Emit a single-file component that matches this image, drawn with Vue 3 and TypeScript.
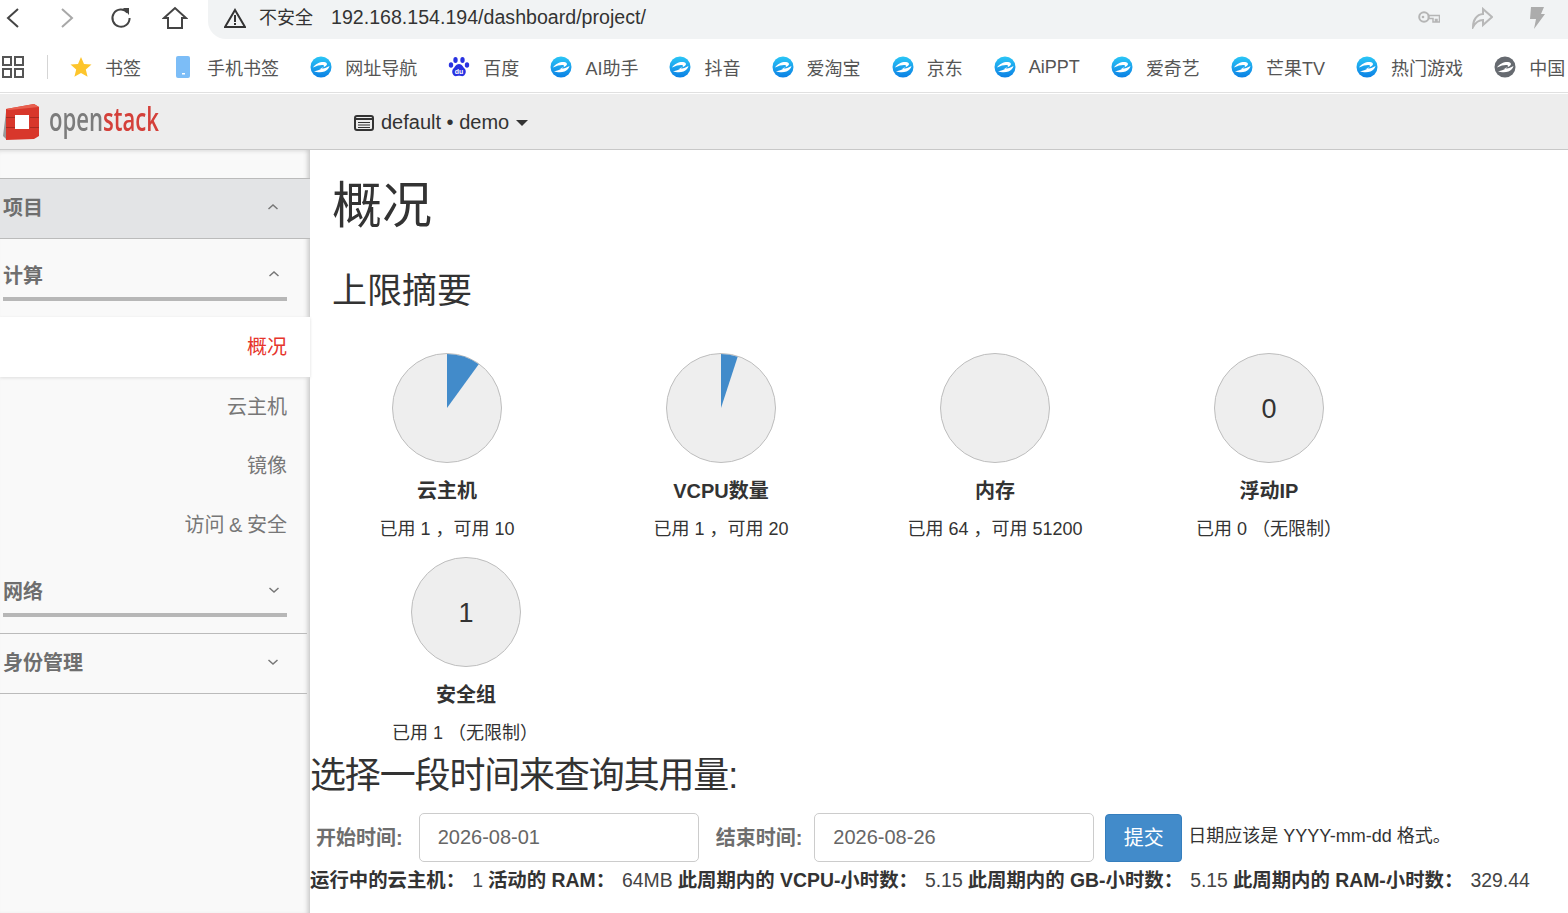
<script setup lang="ts">
interface Quota {
  title: string
  used: number
  limit: number | null
  text: string
}

interface Bookmark {
  label: string
  kind: 'star' | 'phone' | 'edge' | 'paw' | 'grey'
}

const bookmarks: Bookmark[] = [
  { label: '书签', kind: 'star' },
  { label: '手机书签', kind: 'phone' },
  { label: '网址导航', kind: 'edge' },
  { label: '百度', kind: 'paw' },
  { label: 'AI助手', kind: 'edge' },
  { label: '抖音', kind: 'edge' },
  { label: '爱淘宝', kind: 'edge' },
  { label: '京东', kind: 'edge' },
  { label: 'AiPPT', kind: 'edge' },
  { label: '爱奇艺', kind: 'edge' },
  { label: '芒果TV', kind: 'edge' },
  { label: '热门游戏', kind: 'edge' },
  { label: '中国', kind: 'grey' }
]

const quotas: Quota[] = [
  { title: '云主机', used: 1, limit: 10, text: '已用 1 ，可用 10' },
  { title: 'VCPU数量', used: 1, limit: 20, text: '已用 1 ，可用 20' },
  { title: '内存', used: 64, limit: 51200, text: '已用 64 ，可用 51200' },
  { title: '浮动IP', used: 0, limit: null, text: '已用 0 （无限制）' }
]

const groupQuota: Quota = { title: '安全组', used: 1, limit: null, text: '已用 1 （无限制）' }

function hasSlice(q: Quota): boolean {
  return !!q.limit && q.used / q.limit > 0.005
}

function slicePath(q: Quota): string {
  if (!q.limit) return ''
  const angle = (q.used / q.limit) * Math.PI * 2
  const x = 55 + 54 * Math.sin(angle)
  const y = 55 - 54 * Math.cos(angle)
  return `M55 55 L55 1 A54 54 0 0 1 ${x.toFixed(2)} ${y.toFixed(2)} Z`
}

const stats = [
  { label: '运行中的云主机：', value: '1' },
  { label: '活动的 RAM：', value: '64MB' },
  { label: '此周期内的 VCPU-小时数：', value: '5.15' },
  { label: '此周期内的 GB-小时数：', value: '5.15' },
  { label: '此周期内的 RAM-小时数：', value: '329.44' }
]
</script>

<template>
  <div class="page">
    <div class="toolbar">
      <div class="nav-btns">
        <svg class="tool" width="20" height="24" viewBox="0 0 20 24"><path d="M15 3 5 12l10 9" fill="none" stroke="#444" stroke-width="2" /></svg>
        <svg class="tool fwd" width="20" height="24" viewBox="0 0 20 24"><path d="m5 3 10 9-10 9" fill="none" stroke="#a8a8a8" stroke-width="2" /></svg>
        <svg class="tool reload" width="24" height="24" viewBox="0 0 24 24"><path d="M18.500 6.500A8.600 8.600 0 1 0 20.600 12" fill="none" stroke="#444" stroke-width="2" /><path d="M14 2h6v7z" fill="#444" /></svg>
        <svg class="tool home" width="26" height="24" viewBox="0 0 26 24"><path d="M2 12 13 2l11 10h-4v10H6V12z" fill="none" stroke="#444" stroke-width="2" /></svg>
      </div>
      <div class="address">
        <svg width="22" height="20" viewBox="0 0 22 20"><path d="M11 2 21 19H1z" fill="none" stroke="#333" stroke-width="2" /><path d="M11 7v7M11 15v2" stroke="#333" stroke-width="2" /></svg>
        <span class="unsafe">不安全</span>
        <span class="url">192.168.154.194/dashboard/project/</span>
        <div class="addr-right">
          <svg class="key" width="22" height="13" viewBox="0 0 22 13"><circle cx="6" cy="6" r="4.800" fill="none" stroke="#b5b5b5" stroke-width="2" /><circle cx="5" cy="6" r="1.300" fill="#b5b5b5" /><path d="M10.500 4.500H21.500V11H19V8.500h-1.500V11H15V7.500h-4.500z" fill="none" stroke="#b5b5b5" stroke-width="1.500" /></svg>
          <svg class="share" width="22" height="22" viewBox="0 0 22 22"><path d="M12 2l9 8-9 8v-5c-4.500 0-7.500 2.500-10 7 0-7 3.500-12.500 10-13z" fill="none" stroke="#b8b8b8" stroke-width="2" /></svg>
          <svg class="bolt" width="16" height="24" viewBox="0 0 16 24"><path d="M2 1h13l-3 7h4L5 23l2-10H1z" fill="#acacac" /></svg>
        </div>
      </div>
    </div>

    <div class="bookmarks">
      <svg class="apps" width="22" height="22" viewBox="0 0 22 22">
        <g fill="none" stroke="#555" stroke-width="2">
          <rect x="1" y="1" width="8" height="8" />
          <rect x="13" y="1" width="8" height="8" />
          <rect x="1" y="13" width="8" height="8" />
          <rect x="13" y="13" width="8" height="8" />
        </g>
      </svg>
      <span class="divider"></span>
      <div v-for="b in bookmarks" :key="b.label" class="bookmark">
        <svg v-if="b.kind === 'star'" width="22" height="22" viewBox="0 0 22 22"><path d="m11 1 3 7 7.500.6-5.700 4.900 1.800 7.300L11 16.900l-6.600 3.900 1.800-7.300L.5 8.600 8 8z" fill="#fdc52c" /></svg>
        <svg v-else-if="b.kind === 'phone'" width="22" height="22" viewBox="0 0 22 22"><rect x="4" y="0" width="14" height="22" rx="2" fill="#7cbdf7" /><rect x="10" y="17" width="3" height="1.500" fill="#fff" /></svg>
        <svg v-else-if="b.kind === 'paw'" width="22" height="22" viewBox="0 0 22 22">
          <g fill="#2932e1">
            <ellipse cx="7.500" cy="4" rx="2.200" ry="3" />
            <ellipse cx="14.500" cy="4" rx="2.200" ry="3" />
            <ellipse cx="3" cy="9" rx="2.200" ry="2.800" />
            <ellipse cx="19" cy="9" rx="2.200" ry="2.800" />
            <path d="M11 8c3 0 4 3 6 5 2 3 0 8-4 7-1.500-.4-2.500-.4-4 0-4 1-6-4-4-7 2-2 3-5 6-5z" />
          </g>
          <text x="11" y="18" text-anchor="middle" class="du">du</text>
        </svg>
        <svg v-else width="22" height="22" viewBox="0 0 22 22">
          <defs>
            <linearGradient id="edgeFill" x1="0" y1="0" x2="0" y2="1">
              <stop offset="0" stop-color="#2bc6f6" />
              <stop offset="1" stop-color="#0b80e4" />
            </linearGradient>
          </defs>
          <circle cx="11" cy="11" r="10.500" :fill="b.kind === 'grey' ? '#666a70' : 'url(#edgeFill)'" />
          <path d="M3 11.500C6 6.500 14 4.500 16.500 7c1.800 2-1.500 4-7 5.500 3 .4 7-.5 10-2.500-.5 2.500-2.500 4.500-5 5.500-4 1.500-8 .5-10.500 0 4.500-1 9.500-3 10-5.500.3-1.700-5-1.500-11 1.500z" fill="#fff" />
        </svg>
        <span>{{ b.label }}</span>
      </div>
    </div>

    <header class="topbar">
      <div class="brand">
        <svg class="cube" width="37" height="38" viewBox="0 0 37 38">
          <path d="M0 33 3 9v27z" fill="#999" />
          <path d="M3 6 31 1l5 3v29l-5 3-28 1z" fill="#d8372b" />
          <path d="M3 6 31 1l5 3-30 3z" fill="#e8604f" />
          <path d="M3 14h9v1H3zM3 24h9v1H3zM27 14h9v1h-9zM27 24h9v1h-9z" fill="#a92a20" />
          <rect x="12" y="12" width="14" height="14" fill="#fff" />
        </svg>
        <span class="wordmark"><span class="open">open</span><span class="stack">stack</span></span>
      </div>
      <div class="project">
        <svg width="20" height="16" viewBox="0 0 20 16"><rect x="1" y="1" width="18" height="14" rx="2" fill="none" stroke="#333" stroke-width="2" /><path d="M1 3h18v2H1zM4 7h12v1H4zM4 9.500h12v1H4zM4 12h12v1H4z" fill="#333" /></svg>
        <span>default • demo</span>
        <i class="caret"></i>
      </div>
    </header>

    <div class="body">
      <aside class="sidebar">
        <div class="nav-head project-head">
          <span>项目</span>
          <svg width="12" height="8" viewBox="0 0 12 8"><path d="m1.500 6 4.500-4 4.500 4" fill="none" stroke="#777" stroke-width="1.500" /></svg>
        </div>
        <div class="nav-sub">
          <span>计算</span>
          <svg width="12" height="8" viewBox="0 0 12 8"><path d="m1.500 6 4.500-4 4.500 4" fill="none" stroke="#777" stroke-width="1.500" /></svg>
        </div>
        <ul class="nav-list">
          <li class="active">概况</li>
          <li>云主机</li>
          <li>镜像</li>
          <li>访问 &amp; 安全</li>
        </ul>
        <div class="nav-sub closed">
          <span>网络</span>
          <svg width="12" height="8" viewBox="0 0 12 8"><path d="m1.500 2 4.500 4 4.500-4" fill="none" stroke="#777" stroke-width="1.500" /></svg>
        </div>
        <div class="nav-head identity">
          <span>身份管理</span>
          <svg width="12" height="8" viewBox="0 0 12 8"><path d="m1.500 2 4.500 4 4.500-4" fill="none" stroke="#777" stroke-width="1.500" /></svg>
        </div>
      </aside>

      <main class="content">
        <h1>概况</h1>
        <h2>上限摘要</h2>
        <div class="charts">
          <div v-for="q in quotas" :key="q.title" class="chart">
            <svg class="pie" width="110" height="110" viewBox="0 0 110 110">
              <circle cx="55" cy="55" r="54.500" fill="#eeeeee" stroke="#bdbdbd" />
              <path v-if="hasSlice(q)" :d="slicePath(q)" fill="#428bca" />
              <text v-if="!q.limit" x="55" y="65" text-anchor="middle" class="count">{{ q.used }}</text>
            </svg>
            <div class="chart-title">{{ q.title }}</div>
            <div class="chart-text">{{ q.text }}</div>
          </div>
        </div>
        <div class="chart second">
          <svg class="pie" width="110" height="110" viewBox="0 0 110 110">
            <circle cx="55" cy="55" r="54.500" fill="#eeeeee" stroke="#bdbdbd" />
            <text x="55" y="65" text-anchor="middle" class="count">{{ groupQuota.used }}</text>
          </svg>
          <div class="chart-title">{{ groupQuota.title }}</div>
          <div class="chart-text shifted">{{ groupQuota.text }}</div>
        </div>

        <h3>选择一段时间来查询其用量:</h3>
        <form class="range" @submit.prevent>
          <label class="first">开始时间:</label>
          <input type="text" value="2026-08-01">
          <label>结束时间:</label>
          <input type="text" value="2026-08-26">
          <button type="submit">提交</button>
          <span class="hint">日期应该是 YYYY-mm-dd 格式。</span>
        </form>
        <div class="usage">
          <template v-for="s in stats" :key="s.label">
            <b>{{ s.label }}</b><span class="val">{{ s.value }}</span>
          </template>
        </div>
      </main>
    </div>
  </div>
</template>

<style scoped>
.page {
  width: 1568px;
  height: 913px;
  overflow: hidden;
  display: flex;
  flex-direction: column;
  font-family: "Liberation Sans", "Noto Sans CJK SC", sans-serif;
  color: #333;
  background: #fff;
}

.toolbar {
  height: 39px;
  flex: none;
  display: flex;
  background: #fff;
}

.nav-btns {
  width: 208px;
  flex: none;
  display: flex;
  align-items: flex-start;
  padding-top: 6px;
  box-sizing: border-box;
}

.tool { flex: none; margin-left: 3px; }
.tool.fwd { margin-left: 34px; }
.tool.reload { margin-left: 32px; }
.tool.home { margin-left: 29px; }

.address {
  flex: 1;
  display: flex;
  align-items: center;
  background: #f1f3f4;
  border-bottom-left-radius: 18px;
  padding: 0 23px 4px 16px;
  font-size: 19.6px;
  color: #333;
}

.unsafe { margin: 0 0 4px 13px; font-size: 18px; }
.url { margin-left: 18px; }

.addr-right {
  margin-left: auto;
  display: flex;
  align-items: center;
}

.share { margin-left: 31px; }
.bolt { margin-left: 36px; }

.bookmarks {
  height: 54px;
  flex: none;
  box-sizing: border-box;
  display: flex;
  align-items: center;
  padding: 3px 0 0 2px;
  white-space: nowrap;
  overflow: hidden;
  font-size: 18px;
  color: #555;
  border-bottom: 1px solid #e0e0e0;
}

.apps { flex: none; }

.divider {
  flex: none;
  width: 1px;
  height: 24px;
  margin: 0 22px 0 23px;
  background: #d5d5d5;
}

.bookmark {
  flex: none;
  display: flex;
  align-items: center;
  gap: 13px;
  margin-right: 31.1px;
}

.du { font: bold 7px "Liberation Sans", sans-serif; fill: #fff; }

.topbar {
  margin-top: 1px;
  height: 56px;
  flex: none;
  box-sizing: border-box;
  display: flex;
  align-items: center;
  background: #ededed;
  border-bottom: 1px solid #c8c8c8;
}

.brand {
  width: 354px;
  flex: none;
  display: flex;
  align-items: center;
  padding-left: 3px;
  box-sizing: border-box;
}

.cube { flex: none; filter: blur(0.5px); }

.wordmark {
  display: inline-block;
  margin-left: 9px;
  font: 600 32px "Open Sans", sans-serif;
  transform: scaleX(0.69);
  transform-origin: left center;
  filter: blur(0.4px);
  line-height: 1;
  margin-top: -6px;
}

.open { color: #7c7c7c; }
.stack { color: #d4403a; }

.project {
  display: flex;
  align-items: center;
  gap: 7px;
  padding-top: 2px;
  font-size: 20px;
  color: #333;
}

.caret {
  width: 0;
  height: 0;
  margin-left: 0;
  border-left: 6px solid transparent;
  border-right: 6px solid transparent;
  border-top: 6px solid #333;
}

.body {
  flex: 1;
  display: flex;
  min-height: 0;
}

.sidebar {
  width: 310px;
  flex: none;
  padding-top: 28px;
  box-sizing: border-box;
  background: #f9f9f9;
  box-shadow: inset -5px 0 5px -3px #c4c4c4, inset 0 4px 4px -3px #ddd;
  color: #6e6e6e;
}

.nav-head {
  height: 61px;
  box-sizing: border-box;
  display: flex;
  align-items: center;
  justify-content: space-between;
  padding: 0 28px 0 3px;
  font-size: 20px;
  font-weight: bold;
  border-top: 1px solid #bbb;
  border-bottom: 1px solid #bbb;
  margin-right: 3px;
}

.project-head {
  background: #e3e4e6;
  margin-right: 0;
  padding: 0 31px 4px 3px;
}

.nav-sub {
  height: 62px;
  box-sizing: border-box;
  margin: 0 23px 0 3px;
  padding: 12px 7px 0 0;
  display: flex;
  align-items: center;
  justify-content: space-between;
  font-size: 20px;
  font-weight: bold;
  border-bottom: 4px solid #b7b7b7;
}

.nav-list {
  list-style: none;
  margin: 16px 0 0;
  padding: 0;
}

.nav-list li {
  height: 59px;
  line-height: 61px;
  padding-right: 23px;
  text-align: right;
  font-size: 20px;
  word-spacing: -1px;
  color: #777;
}

.nav-list li.active {
  height: 60px;
  line-height: 60px;
  background: #fff;
  color: #e6352b;
  box-shadow: 0 1px 3px #ddd;
}

.nav-sub.closed {
  margin-top: 1px;
}

.identity {
  margin-top: 16px;
  height: 61px;
  padding-bottom: 4px;
}

.content {
  flex: 1;
  min-width: 0;
}

h1 {
  margin: 25px 0 0 22px;
  font-size: 50px;
  font-weight: normal;
  line-height: 62px;
  color: #333;
}

h2 {
  margin: 31px 0 0 22px;
  font-size: 35px;
  font-weight: normal;
  line-height: 46px;
  color: #333;
}

.charts {
  margin-top: 39px;
  display: grid;
  grid-template-columns: repeat(4, 274px);
}

.chart {
  display: flex;
  flex-direction: column;
  align-items: center;
}

.chart.second {
  width: 274px;
  margin: 0 0 0 19px;
}

.pie { display: block; }

.count { font: 27px "Liberation Sans", sans-serif; fill: #333; }

.chart-title {
  margin-top: 14px;
  font-size: 20px;
  font-weight: bold;
  line-height: 28px;
}

.chart-text {
  margin-top: 10px;
  font-size: 18px;
  line-height: 28px;
  height: 42px;
  white-space: nowrap;
}

.chart-text.shifted { margin-right: 2px; height: 28px; }

h3 {
  margin: 6px 0 0;
  font-size: 36px;
  font-weight: normal;
  line-height: 46px;
  letter-spacing: -1.15px;
  color: #333;
}

.range {
  margin-top: 14px;
  height: 49px;
  display: flex;
  align-items: center;
  white-space: nowrap;
}

.range label {
  font-size: 20px;
  font-weight: bold;
  color: #6e6e6e;
  margin: 0 12px 2px 17px;
}

.range label.first { margin: 0 16px 2px 6px; }

.range input {
  width: 280px;
  height: 49px;
  box-sizing: border-box;
  padding: 0 18px;
  border: 1px solid #ccc;
  border-radius: 5px;
  font: 20px "Liberation Sans", sans-serif;
  color: #666;
  background: #fff;
}

.range button {
  width: 77px;
  height: 48px;
  margin-left: 11px;
  border: 1px solid #357ebd;
  border-radius: 4px;
  background: #428bca;
  color: #fff;
  padding-bottom: 3px;
  font: 20px "Liberation Sans", "Noto Sans CJK SC", sans-serif;
}

.hint { margin: 0 0 8px 6px; font-size: 18px; color: #333; }

.usage {
  margin-top: 4px;
  font-size: 19.4px;
  line-height: 28px;
  white-space: nowrap;
}

.usage b { color: #333; }
.val { margin: 0 5px 0 7px; color: #444; }
</style>

<style>
html, body { margin: 0; background: #fff; overflow: hidden; }
</style>
